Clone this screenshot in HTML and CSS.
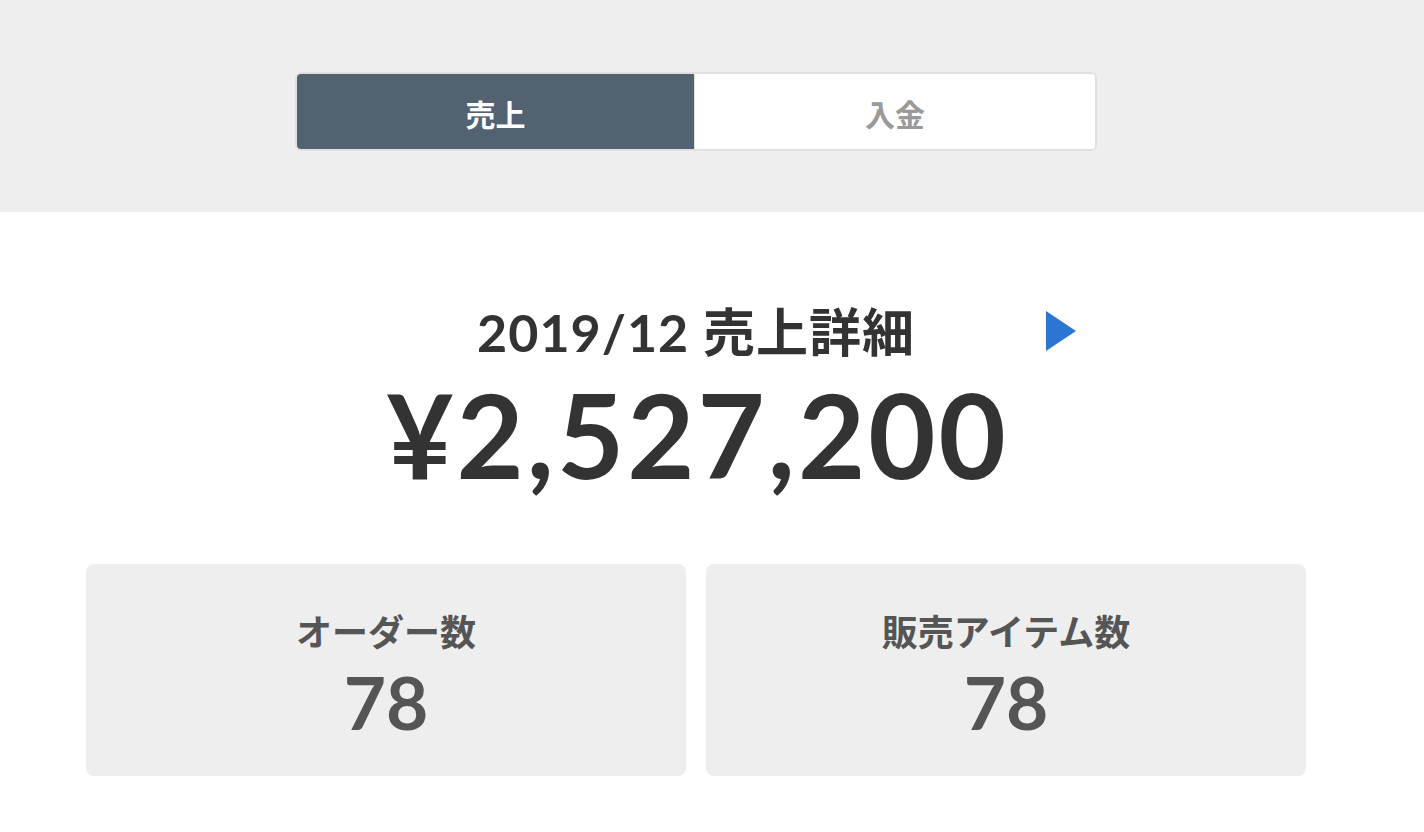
FILE: index.html
```html
<!DOCTYPE html>
<html lang="ja">
<head>
<meta charset="utf-8">
<link rel="stylesheet" href="styles.css">
</head>
<body>
<header class="band">
  <div class="inner">
    <div class="toggle">
      <div class="tab active">売上</div>
      <div class="tab">入金</div>
    </div>
  </div>
</header>
<main class="inner content">
  <div class="heading">
    <h1 class="title">2019/12 売上詳細</h1>
    <span class="arrow"></span>
  </div>
  <div class="amount">¥2,527,200</div>
  <div class="cards">
    <div class="card">
      <div class="label">オーダー数</div>
      <div class="value">78</div>
    </div>
    <div class="card">
      <div class="label">販売アイテム数</div>
      <div class="value">78</div>
    </div>
  </div>
</main>
</body>
</html>
```
FILE: styles.css
```css
* { box-sizing: border-box; }
html, body { margin: 0; padding: 0; background: #fff; }
body {
  font-family: "Lato", "Noto Sans CJK JP", sans-serif;
  font-weight: 700;
  color: #333;
}
.inner {
  width: 1392px;
}
.band {
  background: #eeeeee;
  height: 212px;
  padding-top: 72px;
}
.toggle {
  width: 802px;
  height: 79px;
  margin: 0 auto;
  display: flex;
  border: 2px solid #e0e0e0;
  border-radius: 6px;
  overflow: hidden;
  background: #fff;
}
.tab {
  flex: 1;
  display: flex;
  align-items: center;
  justify-content: center;
  font-size: 30px;
  padding-top: 2px;
  color: #9a9a9a;
  background: #fff;
}
.tab.active {
  flex: 0 0 398px;
  background: #526271;
  color: #fff;
  border-right: 1px solid #e0e0e0;
}
.content {
  padding-top: 89px;
}
.heading {
  position: relative;
  text-align: center;
}
.title {
  margin: 0;
  font-size: 52px;
  line-height: 62px;
  font-weight: 700;
  letter-spacing: 1px;
  color: #333;
}
.arrow {
  position: absolute;
  left: calc(50% + 350px);
  top: 10px;
  width: 0;
  height: 0;
  border-top: 20px solid transparent;
  border-bottom: 20px solid transparent;
  border-left: 30px solid #2a76d2;
}
.amount {
  margin-top: 14px;
  text-align: center;
  font-size: 116px;
  line-height: 116px;
  letter-spacing: 3px;
  padding-left: 3px;
  color: #333;
}
.cards {
  display: flex;
  gap: 20px;
  padding: 0 86px;
  margin-top: 71px;
}
.card {
  flex: 1;
  height: 212px;
  background: #eeeeee;
  border-radius: 8px;
  padding-top: 46px;
  text-align: center;
  color: #555;
}
.label {
  font-size: 36px;
  line-height: 44px;
}
.value {
  margin-top: 12px;
  font-size: 73px;
  line-height: 73px;
}
```
